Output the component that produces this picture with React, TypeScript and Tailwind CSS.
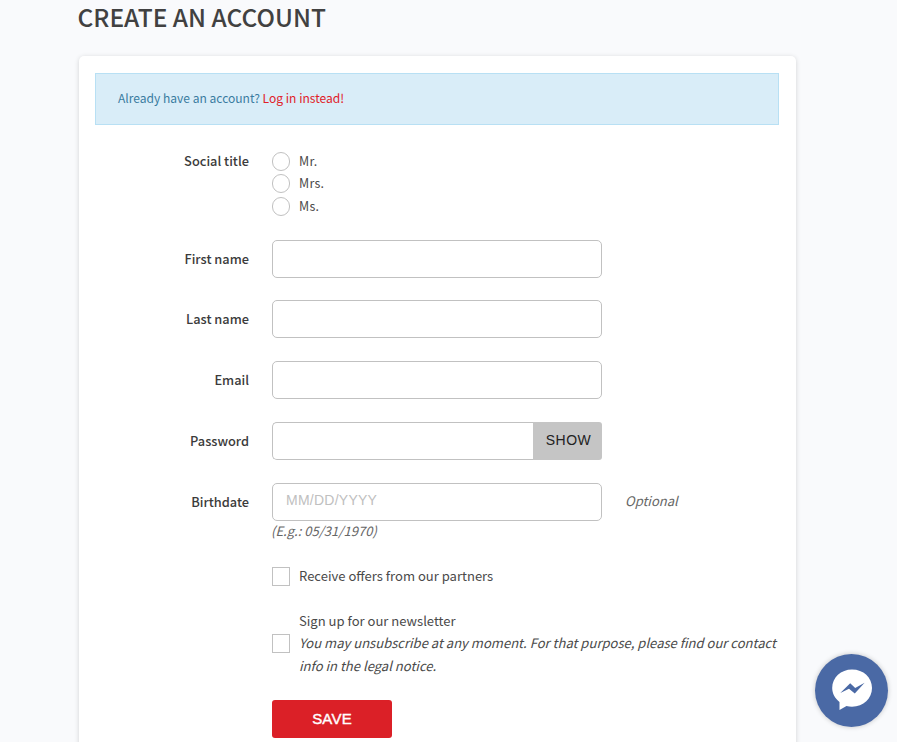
import React, { useState } from "react";

type FieldRowProps = {
  label: string;
  htmlFor: string;
  className: string;
  children: React.ReactNode;
  comment?: string;
};

const FieldRow: React.FC<FieldRowProps> = ({ label, htmlFor, className, children, comment }) => (
  <div className={`flex items-start ${className}`}>
    <label
      htmlFor={htmlFor}
      className="mr-[23px] w-[154px] shrink-0 pt-[9px] text-right text-[12.8px] leading-5 font-medium text-[#3b3b3b]"
    >
      {label}
    </label>
    <div className="w-[330px] shrink-0">{children}</div>
    {comment && <span className="ml-[23px] pt-2 text-[13px] leading-5 text-[#666] italic">{comment}</span>}
  </div>
);

const inputClass =
  "block h-[38px] w-full rounded-[5px] border border-[#c1c1c1] bg-white px-[13px] pb-1 font-['Liberation_Sans',sans-serif] text-[14px] tracking-[0.25px] outline-none placeholder:text-[#c0c0c0]";

const titles = ["Mr.", "Mrs.", "Ms."];

export default function App() {
  const [showPassword, setShowPassword] = useState(false);

  return (
    <div className="h-[742px] overflow-hidden bg-[#f9fafc] font-['Noto_Sans_CJK_JP','Noto_Sans_CJK_SC',sans-serif] text-[#4a4a4a]">
      <h1 className="ml-[77.5px] h-[56px] text-[24.5px] leading-[33px] font-medium whitespace-nowrap text-[#414141]">
        CREATE AN ACCOUNT
      </h1>

      <section className="ml-[79px] h-[720px] w-[717px] rounded-[5px] bg-white px-4 pt-[17px] shadow-[0_1px_5px_rgba(0,0,0,0.16)]">
        <p className="h-[52px] w-[684px] border border-[#b8e0f4] bg-[#d9edf8] pt-[14px] pl-[22px] text-[12.05px] leading-5 text-[#397ca0]">
          Already have an account?{" "}
          <a href="#login" className="text-[#e02028]">
            Log in instead!
          </a>
        </p>

        <form onSubmit={(e) => e.preventDefault()}>
          {/* Social title */}
          <div className="mt-[25px] flex h-[90px] items-start">
            <span className="mr-[23px] w-[154px] shrink-0 pt-[1px] text-right text-[12.8px] leading-5 font-medium text-[#3b3b3b]">
              Social title
            </span>
            <div>
              {titles.map((title) => (
                <label key={title} className="flex h-[22.5px] items-center text-[12.5px] tracking-[0.25px]">
                  <input
                    type="radio"
                    name="title"
                    className="mr-[9px] h-[19px] w-[18px] appearance-none rounded-full border border-[#c1c1c1] bg-white"
                  />
                  {title}
                </label>
              ))}
            </div>
          </div>

          <FieldRow label="First name" htmlFor="firstname" className="h-[60px]">
            <input id="firstname" type="text" className={inputClass} />
          </FieldRow>
          <FieldRow label="Last name" htmlFor="lastname" className="h-[61px]">
            <input id="lastname" type="text" className={inputClass} />
          </FieldRow>
          <FieldRow label="Email" htmlFor="email" className="h-[61px]">
            <input id="email" type="email" className={inputClass} />
          </FieldRow>

          {/* Password */}
          <FieldRow label="Password" htmlFor="password" className="h-[61px]">
            <div className="flex">
              <input
                id="password"
                type={showPassword ? "text" : "password"}
                className="h-[38px] w-[261px] rounded-l-[5px] border border-r-0 border-[#c1c1c1] bg-white px-[13px] outline-none"
              />
              <button
                type="button"
                onClick={() => setShowPassword(!showPassword)}
                className="h-[38px] w-[69px] rounded-r-[3px] bg-[#c5c5c5] pb-[2px] pl-[2px] font-['Liberation_Sans',sans-serif] text-[14px] tracking-[0.5px] text-[#222]"
              >
                {showPassword ? "HIDE" : "SHOW"}
              </button>
            </div>
          </FieldRow>

          {/* Birthdate */}
          <FieldRow label="Birthdate" htmlFor="birthday" className="h-[83px]" comment="Optional">
            <input id="birthday" type="text" placeholder="MM/DD/YYYY" className={inputClass} />
            <span className="-ml-px block text-[13.05px] leading-5 text-[#666] italic">(E.g.: 05/31/1970)</span>
          </FieldRow>

          <div className="ml-[177px]">
            <label className="flex h-5 items-center text-[13.05px]">
              <input
                type="checkbox"
                className="mr-[9px] h-[19px] w-[18px] shrink-0 appearance-none border border-[#c1c1c1] bg-white"
              />
              Receive offers from our partners
            </label>

            <label className="mt-6 flex items-center text-[13.05px] leading-[22.3px]">
              <input
                type="checkbox"
                className="mr-[9px] h-[19px] w-[18px] shrink-0 appearance-none border border-[#c1c1c1] bg-white"
              />
              <span className="whitespace-nowrap">
                Sign up for our newsletter
                <br />
                <em>
                  You may unsubscribe at any moment. For that purpose, please find our contact
                  <br />
                  info in the legal notice.
                </em>
              </span>
            </label>

            <button
              type="submit"
              className="mt-[23px] h-[38px] w-[120px] rounded-[3px] bg-[#db2027] font-['Liberation_Sans',sans-serif] text-[15px] tracking-[0.2px] text-white [-webkit-text-stroke:0.4px_white]"
            >
              SAVE
            </button>
          </div>
        </form>
      </section>

      {/* Messenger chat bubble */}
      <button
        type="button"
        aria-label="Messenger"
        className="fixed top-[654px] left-[815px] size-[73px] rounded-full bg-[#4a69a5] shadow-[0_0_5px_rgba(0,0,0,0.22)]"
      >
        <svg viewBox="0 0 73 73" className="size-full">
          <path
            fill="#fff"
            d="M37 15.500C26 15.500 17.200 23.500 17.200 34C17.200 39.500 20 44.500 24.500 48V56L31.500 52C33.300 52.500 35 52.700 37 52.700C48.500 52.700 57 44.500 57 34C57 23.500 48.500 15.500 37 15.500Z"
          />
          <path fill="#4a69a5" d="M25.300 39L35.200 29.200L40.200 34L49.600 28.700L39.800 39.500L34 34.800Z" />
        </svg>
      </button>
    </div>
  );
}
